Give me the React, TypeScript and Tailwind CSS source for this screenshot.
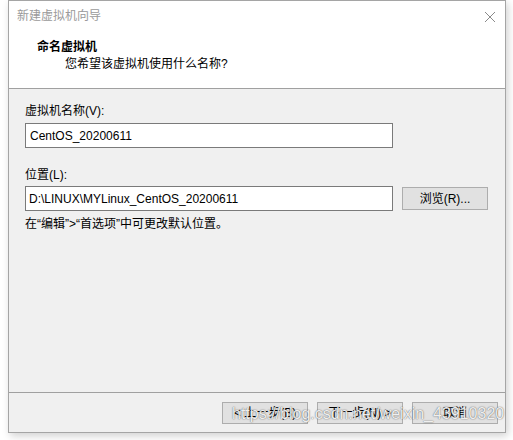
import React from "react";

const font = { fontFamily: '"Liberation Sans", "Noto Sans CJK SC", sans-serif' };

const Btn = ({ label, className = "" }: { label: string; className?: string }) => (
  <div
    className={`flex h-[22px] w-[86px] items-center justify-center border border-[#adadad] bg-[#e1e1e1] text-[12px] text-black ${className}`}
  >
    {label}
  </div>
);

export default function App() {
  return (
    <div className="relative h-[440px] w-[513px] bg-white" style={font}>
      <div className="ml-[8px] flex h-[433px] w-[498px] flex-col border border-[#a5a5a5] shadow-[2px_3px_8px_rgba(0,0,0,0.18)]">
        {/* title bar */}
        <div className="flex h-[30px] items-center justify-between bg-white pl-[8px] pr-[9px]">
          <span className="text-[12px] text-[#9a9a9a]">新建虚拟机向导</span>
          <svg width="12" height="12" viewBox="0 0 12 12" className="mt-[1px]">
            <path d="M1 1 L11 11 M11 1 L1 11" stroke="#8a8a8a" strokeWidth="1" fill="none" />
          </svg>
        </div>

        {/* header */}
        <div className="flex h-[57px] flex-col bg-white pt-[7px]">
          <div className="pl-[28px] text-[12px] font-bold leading-[18px] text-black">命名虚拟机</div>
          <div className="pl-[56px] text-[12px] leading-[16px] text-black">您希望该虚拟机使用什么名称?</div>
        </div>

        {/* body */}
        <div className="flex flex-1 flex-col border-t border-[#a0a0a0] bg-[#f0f0f0] pl-[16px] pt-[14px]">
          <div className="text-[12px] leading-[16px] text-black">虚拟机名称(V):</div>
          <div className="mt-[4px] flex h-[25px] w-[368px] items-center border border-[#7a7a7a] bg-white pl-[4px] text-[12px] text-black">
            CentOS_20200611
          </div>
          <div className="mt-[19px] text-[12px] leading-[16px] text-black">位置(L):</div>
          <div className="mt-[3px] flex items-center gap-[9px]">
            <div className="flex h-[25px] w-[368px] items-center border border-[#7a7a7a] bg-white pl-[3px] text-[12px] text-black">
              D:\LINUX\MYLinux_CentOS_20200611
            </div>
            <Btn label="浏览(R)..." className="h-[23px]" />
          </div>
          <div className="mt-[5px] text-[12px] leading-[16px] text-black">{"在“编辑”>“首选项”中可更改默认位置。"}</div>
        </div>

        {/* footer */}
        <div className="flex h-[40px] items-start justify-end gap-[9px] border-t border-[#a0a0a0] bg-[#f0f0f0] pr-[7px] pt-[9px]">
          <Btn label="< 上一步(B)" />
          <Btn label="下一步(N) >" />
          <Btn label="取消" />
        </div>
      </div>

      {/* watermark */}
      <div
        className="absolute left-[232px] top-[404px] text-[16px] leading-[20px] text-white/90 [text-shadow:0_0_1px_rgba(0,0,0,0.6),0_0_2px_rgba(0,0,0,0.25)]"
        style={{ fontFamily: '"Liberation Sans", Arial, sans-serif' }}
      >
        https://blog.csdn.net/weixin_43910320
      </div>
    </div>
  );
}
